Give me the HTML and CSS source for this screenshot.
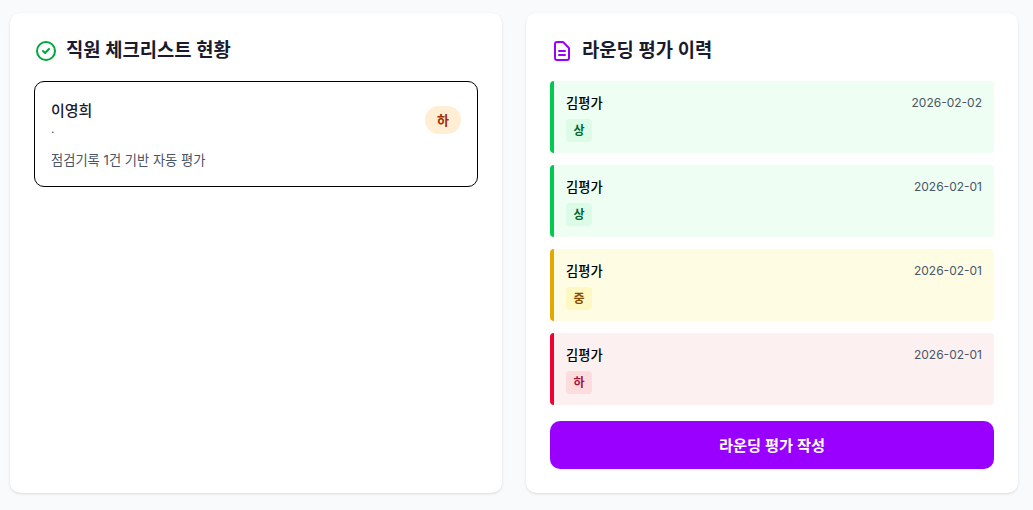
FILE: index.html
```html
<!DOCTYPE html>
<html lang="ko">
<head>
    <meta charset="UTF-8">
    <title>라운딩 평가</title>
    <link rel="stylesheet" href="styles.css">
</head>
<body>
    <div class="page">
        <section class="card">
            <h2 class="card-title">
                <svg class="title-icon" viewBox="0 0 24 24" fill="none" stroke="#00a63e" stroke-width="2" stroke-linecap="round" stroke-linejoin="round">
                    <path d="M9 12l2 2 4-4m6 2a9 9 0 11-18 0 9 9 0 0118 0z"></path>
                </svg>
                직원 체크리스트 현황
            </h2>
            <div class="staff-box">
                <div class="staff-top">
                    <div class="staff-info">
                        <div class="staff-name">이영희</div>
                        <div class="staff-dept">.</div>
                    </div>
                    <span class="grade-pill">하</span>
                </div>
                <div class="staff-note">점검기록 1건 기반 자동 평가</div>
            </div>
        </section>
        <section class="card">
            <h2 class="card-title">
                <svg class="title-icon" viewBox="0 0 24 24" fill="none" stroke="#9900ff" stroke-width="2" stroke-linecap="round" stroke-linejoin="round">
                    <path d="M9 12h6m-6 4h6m2 5H7a2 2 0 01-2-2V5a2 2 0 012-2h5.586a1 1 0 01.707.293l5.414 5.414a1 1 0 01.293.707V19a2 2 0 01-2 2z"></path>
                </svg>
                라운딩 평가 이력
            </h2>
            <div class="history">
                <div class="history-item high">
                    <div class="history-top"><span class="evaluator">김평가</span><span class="date">2026-02-02</span></div>
                    <span class="grade-tag">상</span>
                </div>
                <div class="history-item high">
                    <div class="history-top"><span class="evaluator">김평가</span><span class="date">2026-02-01</span></div>
                    <span class="grade-tag">상</span>
                </div>
                <div class="history-item mid">
                    <div class="history-top"><span class="evaluator">김평가</span><span class="date">2026-02-01</span></div>
                    <span class="grade-tag">중</span>
                </div>
                <div class="history-item low">
                    <div class="history-top"><span class="evaluator">김평가</span><span class="date">2026-02-01</span></div>
                    <span class="grade-tag">하</span>
                </div>
            </div>
            <button class="write-btn" type="button">라운딩 평가 작성</button>
        </section>
    </div>
</body>
</html>
```

FILE: styles.css
```css
* {
    margin: 0;
    padding: 0;
    box-sizing: border-box;
}

body {
    background: #f9fafb;
    font-family: Inter, "Noto Sans CJK KR", sans-serif;
    color: #1a1a2e;
    overflow: hidden;
}

.page {
    display: grid;
    grid-template-columns: 1fr 1fr;
    gap: 24px;
    padding: 13px 15px 17px 10px;
    height: 510px;
}

.card {
    background: #fff;
    border-radius: 10px;
    padding: 24px;
    box-shadow: 0 1px 3px rgba(0, 0, 0, 0.1), 0 1px 2px -1px rgba(0, 0, 0, 0.1);
}

.card-title {
    display: flex;
    align-items: center;
    gap: 8px;
    height: 28px;
    margin-bottom: 16px;
    font-size: 18.75px;
    line-height: 28px;
    font-weight: 600;
}

.title-icon {
    width: 24px;
    height: 24px;
}

.staff-box {
    border: 1px solid #000;
    border-radius: 10px;
    padding: 16px;
    height: 106px;
}

.staff-top {
    display: flex;
    justify-content: space-between;
    align-items: center;
    height: 44px;
}

.staff-info {
    align-self: flex-start;
}

.staff-name {
    font-size: 15px;
    line-height: 26px;
    font-weight: 500;
}

.staff-dept {
    font-size: 12px;
    line-height: 10px;
    color: #4a5565;
}

.staff-note {
    margin-top: 8px;
    font-size: 13.25px;
    line-height: 20px;
    color: #4a5565;
}

.grade-pill {
    width: 36px;
    height: 28px;
    border-radius: 14px;
    background: #ffedd4;
    color: #9f2d00;
    font-size: 13px;
    font-weight: 600;
    line-height: 28px;
    text-align: center;
}

.history {
    display: flex;
    flex-direction: column;
    gap: 12px;
}

.history-item {
    height: 72px;
    padding: 11px 12px 12px;
    border-left: 4px solid;
    border-radius: 4px;
}

.history-top {
    display: flex;
    justify-content: space-between;
    align-items: center;
    height: 20px;
    margin-bottom: 7px;
}

.evaluator {
    font-size: 13.25px;
    font-weight: 500;
    color: #000;
}

.date {
    font-size: 12px;
    color: #4a5565;
}

.grade-tag {
    display: block;
    width: 26px;
    height: 23px;
    border-radius: 4px;
    font-size: 12px;
    font-weight: 600;
    line-height: 23px;
    text-align: center;
}

.high {
    background: #eefef3;
    border-color: #00c950;
}

.high .grade-tag {
    background: #dcfce7;
    color: #016630;
}

.mid {
    background: #fefde4;
    border-color: #e4a900;
}

.mid .grade-tag {
    background: #fef9c2;
    color: #894b00;
}

.low {
    background: #fdf0f0;
    border-color: #ef0035;
}

.low .grade-tag {
    background: #fcdcdc;
    color: #a3163a;
}

.write-btn {
    display: block;
    width: 100%;
    height: 48px;
    margin-top: 16px;
    padding-bottom: 2px;
    border: none;
    border-radius: 10px;
    background: #9900ff;
    color: #fff;
    font-family: inherit;
    font-size: 15.25px;
    font-weight: 600;
    cursor: pointer;
}
```
